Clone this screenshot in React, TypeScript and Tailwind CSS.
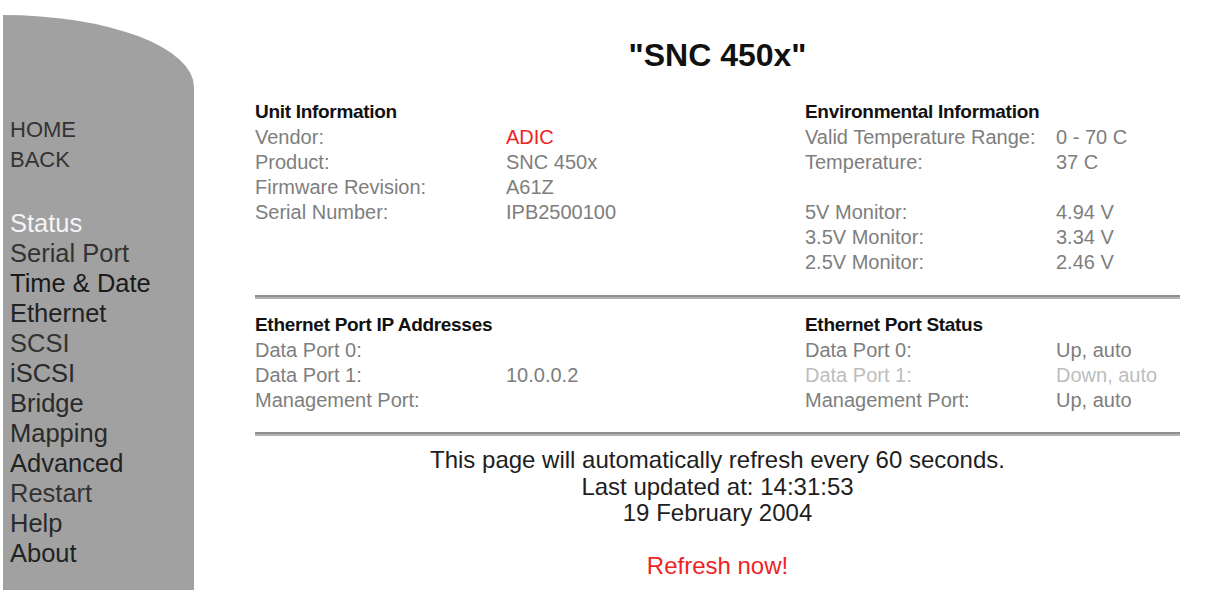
const navTop = ['HOME', 'BACK'];

const navItems = [
  { label: 'Status', color: 'text-[#f4f4f4]' },
  { label: 'Serial Port', color: 'text-[#333]' },
  { label: 'Time & Date', color: 'text-[#1a1a1a]' },
  { label: 'Ethernet', color: 'text-[#222]' },
  { label: 'SCSI', color: 'text-[#333]' },
  { label: 'iSCSI', color: 'text-[#2a2a2a]' },
  { label: 'Bridge', color: 'text-[#2a2a2a]' },
  { label: 'Mapping', color: 'text-[#2a2a2a]' },
  { label: 'Advanced', color: 'text-[#222]' },
  { label: 'Restart', color: 'text-[#333]' },
  { label: 'Help', color: 'text-[#2a2a2a]' },
  { label: 'About', color: 'text-[#222]' },
];

type Row = { label: string; value?: string; tone?: 'red' | 'dim' } | null;

function Section({ title, rows, className }: { title: string; rows: Row[]; className: string }) {
  return (
    <div className={className}>
      <div className="text-[19px] font-bold leading-[26px] tracking-[-0.3px] text-[#111]">{title}</div>
      {rows.map((row, i) =>
        row === null ? (
          <div key={i} className="h-[25px]" />
        ) : (
          <div
            key={i}
            className={`flex text-[20px] leading-[25px] ${row.tone === 'dim' ? 'text-[#bdbdbd]' : 'text-[#7e7e7e]'}`}
          >
            <span className="w-[251px] shrink-0">{row.label}</span>
            <span className={row.tone === 'red' ? 'text-[#ee2424]' : ''}>{row.value}</span>
          </div>
        )
      )}
    </div>
  );
}

function Rule() {
  return <div className="h-[4px] border-t-2 border-b-2 border-t-[#8f8f8f] border-b-[#b2b2b2]" />;
}

export default function App() {
  return (
    <div className="flex h-[590px] w-[1217px] overflow-hidden bg-white font-['Liberation_Sans',Arial,sans-serif]">
      {/* Sidebar */}
      <div className="ml-[3px] mt-[15px] h-[575px] w-[191px] shrink-0 rounded-tr-[191px_72px] bg-[#a1a1a1] pl-[7px] pt-[100px]">
        {navTop.map((t) => (
          <div key={t} className="text-[22px] leading-[30px] text-[#333]">
            {t}
          </div>
        ))}
        <div className="mt-[33px]">
          {navItems.map((n) => (
            <div key={n.label} className={`text-[25.5px] leading-[30px] ${n.color}`}>
              {n.label}
            </div>
          ))}
        </div>
      </div>

      {/* Main */}
      <div className="ml-[61px] w-[925px] shrink-0 pt-[37px]">
        <h1 className="text-center text-[32px] font-bold leading-[36px] text-[#111]">"SNC 450x"</h1>

        <div className="mt-[26px] flex">
          <Section
            className="w-[550px] shrink-0"
            title="Unit Information"
            rows={[
              { label: 'Vendor:', value: 'ADIC', tone: 'red' },
              { label: 'Product:', value: 'SNC 450x' },
              { label: 'Firmware Revision:', value: 'A61Z' },
              { label: 'Serial Number:', value: 'IPB2500100' },
            ]}
          />
          <Section
            className="flex-1"
            title="Environmental Information"
            rows={[
              { label: 'Valid Temperature Range:', value: '0 - 70 C' },
              { label: 'Temperature:', value: '37 C' },
              null,
              { label: '5V Monitor:', value: '4.94 V' },
              { label: '3.5V Monitor:', value: '3.34 V' },
              { label: '2.5V Monitor:', value: '2.46 V' },
            ]}
          />
        </div>

        <div className="mt-[20px]">
          <Rule />
        </div>

        <div className="mt-[13px] flex">
          <Section
            className="w-[550px] shrink-0"
            title="Ethernet Port IP Addresses"
            rows={[
              { label: 'Data Port 0:', value: '' },
              { label: 'Data Port 1:', value: '10.0.0.2' },
              { label: 'Management Port:', value: '' },
            ]}
          />
          <Section
            className="flex-1"
            title="Ethernet Port Status"
            rows={[
              { label: 'Data Port 0:', value: 'Up, auto' },
              { label: 'Data Port 1:', value: 'Down, auto', tone: 'dim' },
              { label: 'Management Port:', value: 'Up, auto' },
            ]}
          />
        </div>

        <div className="mt-[19px]">
          <Rule />
        </div>

        <div className="mt-[11px] text-center text-[24px] leading-[26.5px] text-[#1e1e1e]">
          <div>This page will automatically refresh every 60 seconds.</div>
          <div>Last updated at: 14:31:53</div>
          <div>19 February 2004</div>
          <div className="h-[26.5px]" />
          <div className="text-[#ee2424]">Refresh now!</div>
        </div>
      </div>
    </div>
  );
}
